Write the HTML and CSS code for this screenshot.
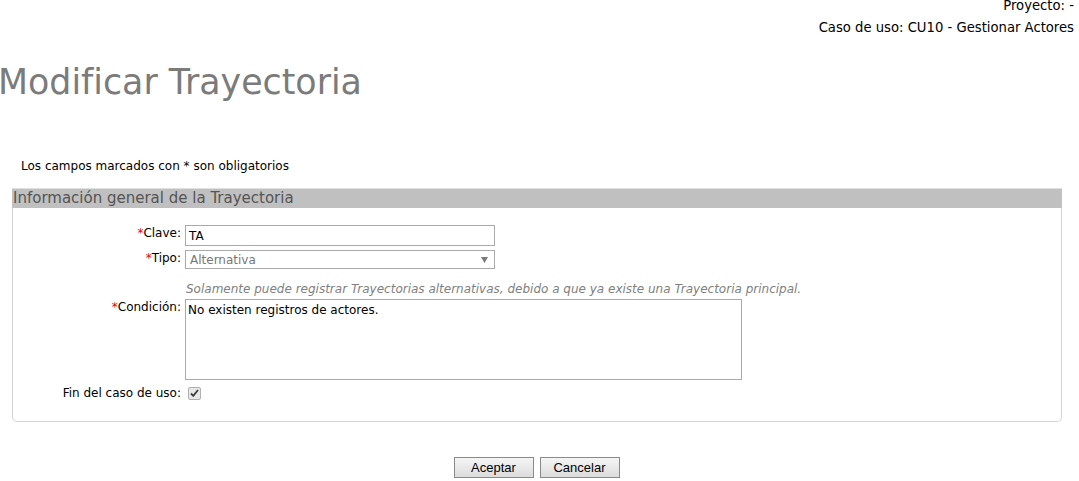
FILE: index.html
```html
<!DOCTYPE html>
<html lang="es">
<head>
<meta charset="utf-8">
<title>Modificar Trayectoria</title>
<link rel="stylesheet" href="styles.css">
</head>
<body>
<div class="context">
  <div class="context-line">Proyecto: -</div>
  <div class="context-line">Caso de uso: CU10 - Gestionar Actores</div>
</div>
<h1 class="title">Modificar Trayectoria</h1>
<p class="note">Los campos marcados con * son obligatorios</p>
<section class="panel">
  <div class="panel-head">Información general de la Trayectoria</div>
  <div class="panel-body">
    <div class="row">
      <label class="label"><span class="req">*</span>Clave:</label>
      <div class="field"><div class="input">TA</div></div>
    </div>
    <div class="row row-tipo">
      <label class="label"><span class="req">*</span>Tipo:</label>
      <div class="field">
        <div class="select"><span>Alternativa</span><svg class="caret" width="7" height="6" viewBox="0 0 7 6"><path d="M0 0H7L3.5 6Z" fill="#7a7a7a"/></svg></div>
        <div class="help">Solamente puede registrar Trayectorias alternativas, debido a que ya existe una Trayectoria principal.</div>
      </div>
    </div>
    <div class="row row-cond">
      <label class="label"><span class="req">*</span>Condición:</label>
      <div class="field"><div class="textarea">No existen registros de actores.</div></div>
    </div>
    <div class="row row-fin">
      <label class="label">Fin del caso de uso:</label>
      <div class="field"><span class="check"><svg width="9" height="8" viewBox="0 0 9 8"><path d="M1 4.5L3.3 6.8L8 1" fill="none" stroke="#3c3c3c" stroke-width="1.8"/></svg></span></div>
    </div>
  </div>
</section>
<div class="actions">
  <button class="btn" type="button">Aceptar</button>
  <button class="btn" type="button">Cancelar</button>
</div>
</body>
</html>
```
FILE: styles.css
```css
html, body { margin: 0; padding: 0; background: #fff; }
body { font-family: "DejaVu Sans", Verdana, sans-serif; font-size: 12px; color: #000; }
* { box-sizing: border-box; }
.context { display: flex; flex-direction: column; align-items: flex-end; padding: 0 5px 0 0; }
.context-line { font-size: 13.2px; height: 22px; line-height: 13px; }
.context-line:first-child { margin-top: -1px; }
.title { margin: 19px 0 0 -2px; font-weight: normal; font-size: 34.8px; color: #7b7b7b; line-height: 40px; }
.note { margin: 57px 0 0 21px; font-size: 12px; line-height: 14px; }
.panel { margin: 15px 17px 0 12px; border: 1px solid #d3d3d3; border-top: none; border-radius: 0 0 5px 5px; }
.panel-head { background: #c0c0c0; color: #555; font-size: 15px; line-height: 19px; height: 20px; border-top: 1px solid #e0e0e0; margin: 0 -1px; padding-left: 1px; }
.panel-body { padding: 17px 0 20px 0; }
.row { display: flex; align-items: flex-start; }
.label { width: 172px; text-align: right; padding-right: 4px; font-size: 12px; line-height: 16px; }
.req { color: #e00; }
.field { display: flex; flex-direction: column; }
.input { width: 310px; height: 21px; border: 1px solid #a9a9a9; padding: 0 3px; font-size: 12px; line-height: 20px; }
.row-tipo { margin-top: 4px; }
.select { width: 310px; height: 19px; border: 1px solid #a9a9a9; padding: 0 6px 0 4px; display: flex; align-items: center; justify-content: space-between; color: #777; font-size: 12px; line-height: 16px; }
.help { margin-top: 13px; font-style: italic; color: #808080; font-size: 12px; line-height: 15px; padding-left: 1px; }
.row-cond { margin-top: 2px; }
.textarea { width: 557px; height: 81px; border: 1px solid #a9a9a9; padding: 2px 2px; font-size: 12px; line-height: 16px; }
.row-fin { margin-top: 5px; align-items: center; }
.check { display: inline-flex; align-items: center; justify-content: center; width: 13px; height: 13px; border: 1px solid #b0b0b0; border-radius: 2px; background: #e8e8e8; margin-left: 3px; }
.actions { display: flex; justify-content: center; gap: 6px; margin-top: 35px; padding-right: 6px; }
.btn { font-family: "Liberation Sans", Arial, sans-serif; font-size: 13px; height: 21px; padding: 0; width: 80px; border: 1px solid #8a8a8a; background: linear-gradient(#f5f5f5, #dcdcdc); color: #000; }
```
